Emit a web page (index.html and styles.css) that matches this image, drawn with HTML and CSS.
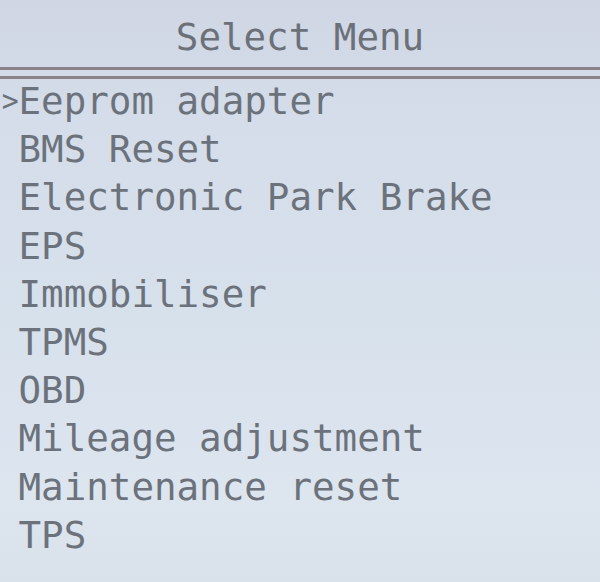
FILE: index.html
```html
<!DOCTYPE html>
<html>
<head>
<meta charset="utf-8">
<link rel="stylesheet" href="styles.css">
</head>
<body>
<div class="screen">
  <div class="title">Select Menu</div>
  <div class="divider"></div>
  <ul class="menu">
    <li class="item selected"><span class="cursor">&gt;</span>Eeprom adapter</li>
    <li class="item"><span class="cursor"> </span>BMS Reset</li>
    <li class="item"><span class="cursor"> </span>Electronic Park Brake</li>
    <li class="item"><span class="cursor"> </span>EPS</li>
    <li class="item"><span class="cursor"> </span>Immobiliser</li>
    <li class="item"><span class="cursor"> </span>TPMS</li>
    <li class="item"><span class="cursor"> </span>OBD</li>
    <li class="item"><span class="cursor"> </span>Mileage adjustment</li>
    <li class="item"><span class="cursor"> </span>Maintenance reset</li>
    <li class="item"><span class="cursor"> </span>TPS</li>
  </ul>
</div>
</body>
</html>
```
FILE: styles.css
```css
html, body {
  margin: 0;
  padding: 0;
}
body {
  width: 600px;
  height: 582px;
  overflow: hidden;
  background: #d8e2ec;
}
.screen {
  width: 600px;
  height: 582px;
  background: linear-gradient(180deg, #d0d6e4 0%, #d4dde9 20%, #d7e1ec 55%, #dde5ef 85%, #d9e1eb 100%);
  font-family: "DejaVu Sans Mono", "Liberation Mono", monospace;
  font-size: 37.5px;
  color: #6c727b;
  box-sizing: border-box;
}
.title {
  padding-top: 13px;
  line-height: 48px;
  height: 48px;
  text-align: center;
  color: #6c7079;
}
.divider {
  margin-top: 6px;
  height: 6px;
  border-top: 3px solid #8a8189;
  border-bottom: 3px solid #8a8189;
}
.menu {
  list-style: none;
  margin: -2px 0 0 -4px;
  padding: 0;
}
.item {
  line-height: 48.2px;
  height: 48.2px;
  white-space: pre;
}
.cursor {
  display: inline-block;
  width: 22.5px;
  transform: scale(0.75, 0.8);
  transform-origin: right center;
}
```
